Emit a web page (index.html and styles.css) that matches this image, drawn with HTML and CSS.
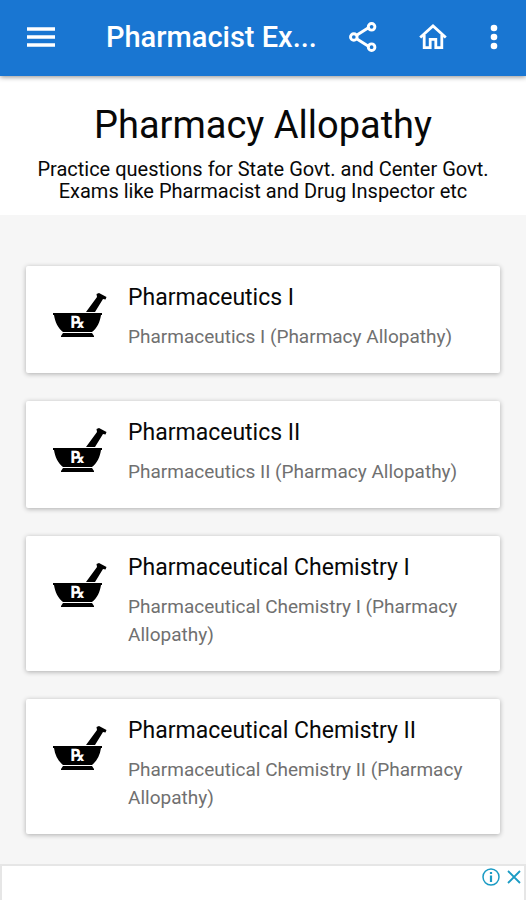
FILE: index.html
```html
<!DOCTYPE html>
<html lang="en">
<head>
<meta charset="utf-8">
<meta name="viewport" content="width=device-width, initial-scale=1">
<title>Pharmacy Allopathy</title>
<link rel="stylesheet" href="styles.css">
</head>
<body>
<header class="bar">
  <button class="icon-button menu" aria-label="Menu">
    <svg width="28" height="22" viewBox="0 0 28 22"><path d="M0 3H28M0 11H28M0 19H28" stroke="currentColor" stroke-width="3.4"/></svg>
  </button>
  <p class="bar-title">Pharmacist Ex...</p>
  <nav class="actions">
    <button class="icon-button" aria-label="Share">
      <svg width="28" height="30" viewBox="0 0 28 30" fill="none" stroke="currentColor" stroke-width="2.9"><path d="M8 13L19 6M8 17L19 24"/><circle cx="4.8" cy="15" r="3.3"/><circle cx="22.6" cy="4.8" r="3.3"/><circle cx="22.6" cy="25.2" r="3.3"/></svg>
    </button>
    <button class="icon-button" aria-label="Home">
      <svg width="28" height="30" viewBox="0 0 28 30" fill="none" stroke="currentColor" stroke-width="2.8"><path d="M1.2 15.5L14 4L26.8 15.5M5.2 13V25.6H11.2V17.4H16.8V25.6H22.8V13"/></svg>
    </button>
    <button class="icon-button more" aria-label="More">
      <svg width="8" height="26" viewBox="0 0 8 26" fill="currentColor"><circle cx="4" cy="4" r="3.3"/><circle cx="4" cy="13" r="3.3"/><circle cx="4" cy="22" r="3.3"/></svg>
    </button>
  </nav>
</header>
<section class="intro">
  <h1>Pharmacy Allopathy</h1>
  <p>Practice questions for State Govt. and Center Govt. Exams like Pharmacist and Drug Inspector etc</p>
</section>
<main class="list">
  <article class="card">
    <svg class="mortar" viewBox="0 0 54 46"><path d="M33 19L44 4L43.5 1L46 0L53.5 4L52.5 6.5L50 6L42 19Z"/><path d="M0 20H49V22H48C47 29 44 35 39 39H10C5 35 2 29 1 22H0Z"/><path d="M10 40H39L41 43V44H8V43Z"/><text class="rx" x="18" y="35">℞</text></svg>
    <div><h2>Pharmaceutics I</h2><p>Pharmaceutics I (Pharmacy Allopathy)</p></div>
  </article>
  <article class="card">
    <svg class="mortar" viewBox="0 0 54 46"><path d="M33 19L44 4L43.5 1L46 0L53.5 4L52.5 6.5L50 6L42 19Z"/><path d="M0 20H49V22H48C47 29 44 35 39 39H10C5 35 2 29 1 22H0Z"/><path d="M10 40H39L41 43V44H8V43Z"/><text class="rx" x="18" y="35">℞</text></svg>
    <div><h2>Pharmaceutics II</h2><p>Pharmaceutics II (Pharmacy Allopathy)</p></div>
  </article>
  <article class="card">
    <svg class="mortar" viewBox="0 0 54 46"><path d="M33 19L44 4L43.5 1L46 0L53.5 4L52.5 6.5L50 6L42 19Z"/><path d="M0 20H49V22H48C47 29 44 35 39 39H10C5 35 2 29 1 22H0Z"/><path d="M10 40H39L41 43V44H8V43Z"/><text class="rx" x="18" y="35">℞</text></svg>
    <div><h2>Pharmaceutical Chemistry I</h2><p>Pharmaceutical Chemistry I (Pharmacy Allopathy)</p></div>
  </article>
  <article class="card">
    <svg class="mortar" viewBox="0 0 54 46"><path d="M33 19L44 4L43.5 1L46 0L53.5 4L52.5 6.5L50 6L42 19Z"/><path d="M0 20H49V22H48C47 29 44 35 39 39H10C5 35 2 29 1 22H0Z"/><path d="M10 40H39L41 43V44H8V43Z"/><text class="rx" x="18" y="35">℞</text></svg>
    <div><h2>Pharmaceutical Chemistry II</h2><p>Pharmaceutical Chemistry II (Pharmacy Allopathy)</p></div>
  </article>
</main>
<aside class="ad">
  <button class="ad-button" aria-label="Ad information">
    <svg width="18" height="18" viewBox="0 0 18 18" fill="none" stroke="currentColor"><circle cx="9" cy="9" r="8" stroke-width="1.5"/><path d="M9 7.5V14M9 4V6" stroke-width="2.2"/></svg>
  </button>
  <button class="ad-button" aria-label="Close ad">
    <svg width="14" height="14" viewBox="0 0 14 14" fill="none" stroke="currentColor" stroke-width="1.8"><path d="M1 1L13 13M13 1L1 13"/></svg>
  </button>
</aside>
</body>
</html>
```
FILE: styles.css
```css
* {
  box-sizing: border-box;
}

body {
  display: flex;
  flex-direction: column;
  min-height: 100vh;
  margin: 0;
  background: #f6f6f6;
  color: #080808;
  font-family: Roboto, sans-serif;
}

h1, h2, p {
  margin: 0;
  font-weight: 400;
}

button {
  display: flex;
  padding: 0;
  border: 0;
  background: none;
  color: inherit;
}

.bar {
  position: relative;
  display: flex;
  align-items: center;
  height: 76px;
  padding: 0 28px 2px 27px;
  background: #1976d2;
  color: #fff;
  box-shadow: 0 1px 5px rgba(0, 0, 0, 0.45);
}

.bar-title {
  flex: 1;
  margin-left: 51px;
  overflow: hidden;
  font-size: 29px;
  font-weight: 500;
  line-height: 36px;
  white-space: nowrap;
}

.actions {
  display: flex;
  align-items: center;
  gap: 42px;
}

.more {
  margin-left: 1px;
}

.intro {
  padding: 26px 24px 13px;
  background: #fff;
  text-align: center;
}

.intro h1 {
  font-size: 38px;
  line-height: 46px;
}

.intro p {
  margin-top: 10px;
  font-size: 20px;
  line-height: 22px;
}

.list {
  display: flex;
  flex-direction: column;
  gap: 28px;
  padding: 51px 26px 30px;
}

.card {
  display: flex;
  align-items: flex-start;
  gap: 21px;
  padding: 18px 26px 22px 27px;
  border-radius: 2px;
  background: #fff;
  box-shadow: 0 1px 5px rgba(0, 0, 0, 0.3);
}

.mortar {
  flex: none;
  width: 54px;
  height: 46px;
  margin-top: 9px;
}

.rx {
  fill: #fff;
  font-family: "DejaVu Sans Condensed", "DejaVu Sans", sans-serif;
  font-size: 17px;
  font-weight: 700;
}

.card h2 {
  font-size: 23px;
  line-height: 28px;
}

.card p {
  margin-top: 11px;
  color: #707070;
  font-size: 19px;
  line-height: 28px;
}

.ad {
  display: flex;
  flex: 1;
  align-items: flex-start;
  justify-content: flex-end;
  gap: 7px;
  padding: 2px 3px;
  border: 2px solid #e6e6e6;
  border-bottom: 0;
  background: #fff;
  color: #1a9bc4;
}

.ad-button {
  height: 18px;
  align-items: center;
}
```
